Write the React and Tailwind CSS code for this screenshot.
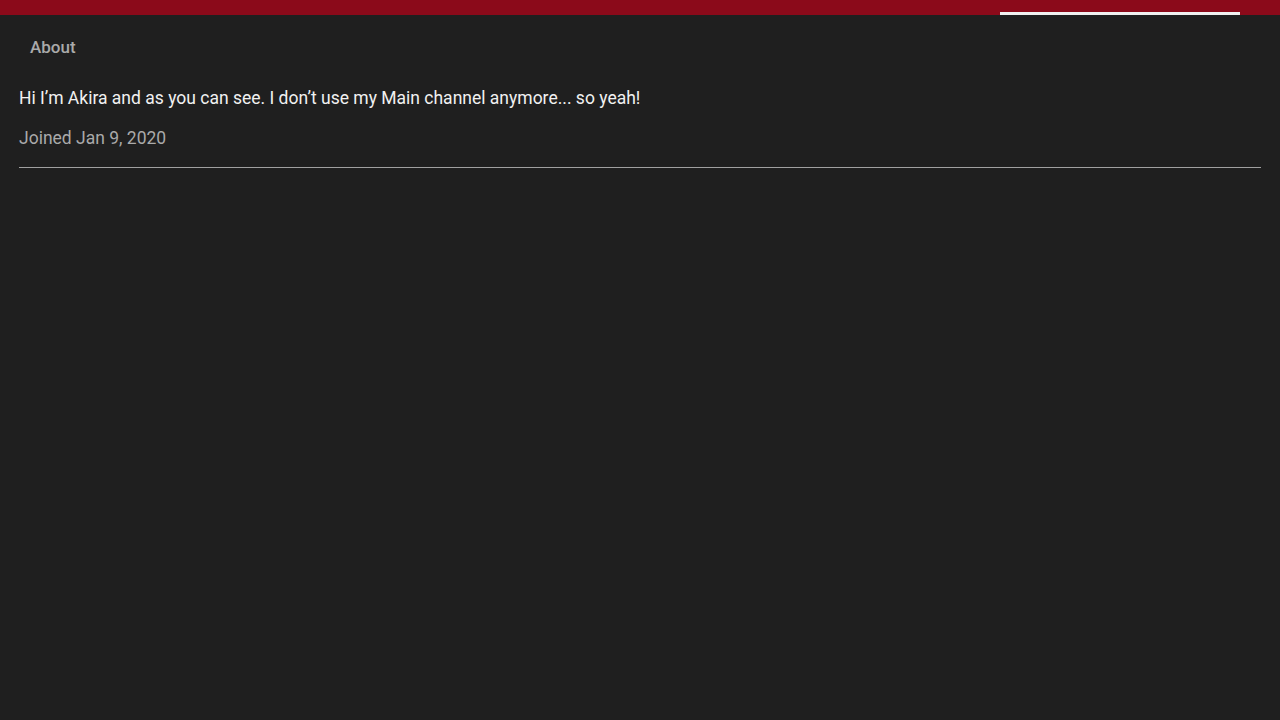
export default function App() {
    return (
        <div className="h-screen w-full bg-[#1f1f1f] flex flex-col overflow-hidden" style={{ fontFamily: "Roboto, 'Liberation Sans', sans-serif" }}>
            {/* ===== Top Bar with active tab indicator ===== */}
            <div className="h-[15px] bg-[#8b0a1a] flex items-end justify-end pr-[40px] shrink-0">
                <div className="w-[240px] h-[3px] bg-[#f1f1f1]" />
            </div>

            {/* ===== About ===== */}
            <div className="px-[19px]">
                <div className="pl-[11px] pt-[22px] text-[17px] font-medium text-[#aaaaaa] leading-[20px]">
                    About
                </div>
                <p className="mt-[31px] text-[17.5px] text-[#f1f1f1] leading-[20px]">
                    Hi I’m Akira and as you can see. I don’t use my Main channel anymore... so yeah!
                </p>
                <p className="mt-[20px] text-[17.5px] text-[#aaaaaa] leading-[20px]">
                    Joined Jan 9, 2020
                </p>
                <div className="mt-[19px] h-[1px] bg-[#a0a0a0]" />
            </div>
        </div>
    );
}
